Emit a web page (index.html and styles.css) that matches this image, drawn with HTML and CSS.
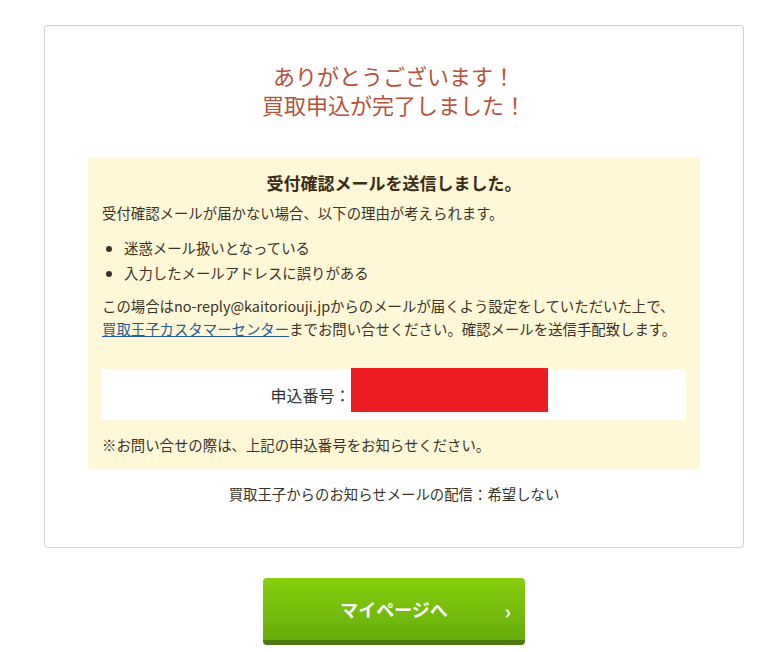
FILE: index.html
```html
<!DOCTYPE html>
<html lang="ja">
<head>
    <meta charset="UTF-8">
    <title>買取申込完了</title>
    <link rel="stylesheet" href="styles.css">
</head>
<body>
<div id="wrap">
    <div class="card">
        <h1 class="thanks">ありがとうございます！<br>買取申込が完了しました！</h1>
        <div class="notice">
            <h2 class="notice-title">受付確認メールを送信しました。</h2>
            <p class="lead">受付確認メールが届かない場合、以下の理由が考えられます。</p>
            <ul class="reasons">
                <li>迷惑メール扱いとなっている</li>
                <li>入力したメールアドレスに誤りがある</li>
            </ul>
            <p class="guide">この場合はno-reply@kaitoriouji.jpからのメールが届くよう設定をしていただいた上で、<br><a href="#">買取王子カスタマーセンター</a>までお問い合せください。確認メールを送信手配致します。</p>
            <div class="number">
                <span class="number-label">申込番号：</span>
                <span class="number-value"></span>
            </div>
            <p class="note">※お問い合せの際は、上記の申込番号をお知らせください。</p>
        </div>
        <p class="mailmag">買取王子からのお知らせメールの配信：希望しない</p>
    </div>
    <div class="btn-area">
        <a href="#" class="btn-mypage">マイページへ<span class="arrow">›</span></a>
    </div>
</div>
</body>
</html>
```

FILE: styles.css
```css
* {
    padding: 0;
    margin: 0;
    box-sizing: border-box;
}

body {
    font-family: "Noto Sans CJK JP", "Noto Sans", sans-serif;
    font-size: 14.4px;
    color: #3a3226;
    background: #fff;
}

#wrap {
    width: 700px;
    margin: 25px 0 0 44px;
}

.card {
    border: 1px solid #cfcfcf;
    border-radius: 4px;
    padding: 35px 43px 42px;
}

.thanks {
    font-size: 22px;
    font-weight: normal;
    line-height: 29px;
    color: #b5533c;
    text-align: center;
}

.notice {
    margin-top: 38px;
    background: #fff8d6;
    padding: 14px 14px 13px;
}

.notice-title {
    font-size: 17px;
    line-height: 24px;
    text-align: center;
    color: #3a2c14;
}

.lead {
    margin-top: 6px;
    line-height: 23px;
}

.reasons {
    margin-top: 11px;
    padding-left: 22px;
    line-height: 25px;
}

.guide {
    margin-top: 9px;
    line-height: 23px;
}

.guide a {
    color: #1f5c9c;
    text-decoration: underline;
}

.number {
    margin-top: 29px;
    height: 51px;
    background: #fff;
    display: flex;
    justify-content: center;
    align-items: center;
    padding-left: 30px;
}

.number-label {
    font-size: 16px;
    color: #333;
}

.number-value {
    width: 197px;
    height: 44px;
    background: #ed1c24;
    align-self: flex-start;
    margin-top: -1px;
}

.note {
    margin-top: 13px;
    line-height: 23px;
}

.mailmag {
    margin-top: 13px;
    line-height: 23px;
    text-align: center;
}

.btn-area {
    margin-top: 30px;
    display: flex;
    justify-content: center;
}

.btn-mypage {
    position: relative;
    display: block;
    width: 262px;
    height: 67px;
    line-height: 62px;
    border-radius: 4px;
    background: linear-gradient(#86cf0e, #66ac0b);
    border-bottom: 5px solid #4a7a0e;
    color: #fff;
    font-size: 18px;
    font-weight: bold;
    text-align: center;
    text-decoration: none;
}

.arrow {
    position: absolute;
    right: 14px;
    top: 2px;
    font-size: 20px;
}
```
